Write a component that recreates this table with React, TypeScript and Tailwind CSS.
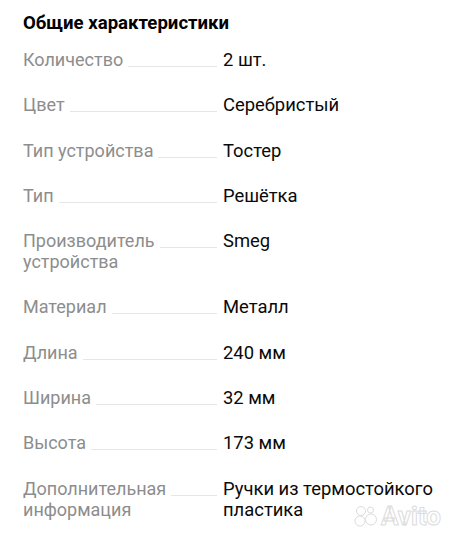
import React from "react";

const rows: { label: string[]; value: string[] }[] = [
  { label: ["Количество"], value: ["2 шт."] },
  { label: ["Цвет"], value: ["Серебристый"] },
  { label: ["Тип устройства"], value: ["Тостер"] },
  { label: ["Тип"], value: ["Решётка"] },
  { label: ["Производитель", "устройства"], value: ["Smeg"] },
  { label: ["Материал"], value: ["Металл"] },
  { label: ["Длина"], value: ["240 мм"] },
  { label: ["Ширина"], value: ["32 мм"] },
  { label: ["Высота"], value: ["173 мм"] },
  { label: ["Дополнительная", "информация"], value: ["Ручки из термостойкого", "пластика"] },
];

export default function App() {
  return (
    <div
      className="relative w-[460px] h-[540px] overflow-hidden bg-white"
      style={{ fontFamily: "Roboto, 'Liberation Sans', sans-serif" }}
    >
      <div className="pl-[23px] pt-[12px]">
        <h2 className="text-[18.6px] leading-[22px] font-bold text-[#000]">Общие характеристики</h2>
        <div className="mt-[15px] flex flex-col gap-[24.3px]">
          {rows.map((r, i) => (
            <div key={i} className="flex leading-[21px]">
              <div className="w-[200px] shrink-0 text-[18px] text-[#8d8d8d]">
                <div className="flex items-end">
                  <span className="whitespace-nowrap">{r.label[0]}</span>
                  <div className="flex-1 ml-[5px] mr-[6px] mb-[3px] border-b border-[#e6e6e6]" />
                </div>
                {r.label.slice(1).map((l, j) => (
                  <div key={j}>{l}</div>
                ))}
              </div>
              <div className="text-[18.4px] text-[#0a0a0a]">
                {r.value.map((v, j) => (
                  <div key={j}>{v}</div>
                ))}
              </div>
            </div>
          ))}
        </div>
      </div>
      <div className="absolute left-[354px] top-[504px] flex items-center gap-[3px] pointer-events-none">
        <svg width="24" height="22" viewBox="0 0 24 22">
          <g fill="#fff" stroke="#dcdcdc" strokeWidth="1">
            <circle cx="7" cy="6" r="4.5" />
            <circle cx="16.5" cy="5" r="3" />
            <circle cx="6" cy="16" r="5" />
            <circle cx="17" cy="14.5" r="5.5" />
          </g>
        </svg>
        <span
          className="text-[26px] leading-[24px] font-bold text-white"
          style={{ WebkitTextStroke: "1px #dcdcdc" }}
        >
          Avito
        </span>
      </div>
    </div>
  );
}
